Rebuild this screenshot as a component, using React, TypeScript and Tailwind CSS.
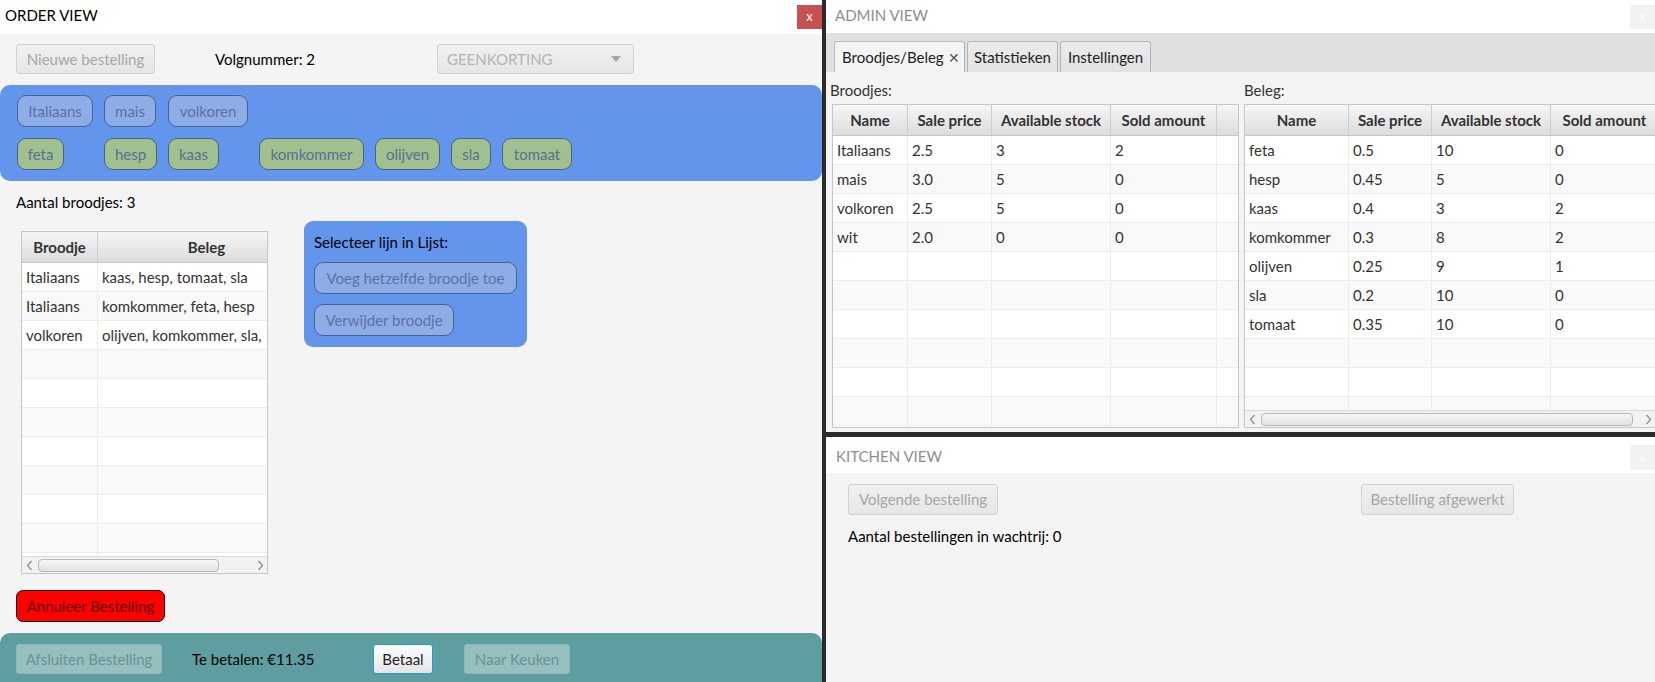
import React from 'react';

type Col = { label: string; w: string };

const ChevL = () => (
  <svg width="7" height="11" viewBox="0 0 7 11" className="shrink-0">
    <path d="M5.5 1 L1.5 5.5 L5.5 10" fill="none" stroke="#8c8c8c" strokeWidth="1.2" />
  </svg>
);
const ChevR = () => (
  <svg width="7" height="11" viewBox="0 0 7 11" className="shrink-0">
    <path d="M1.5 1 L5.5 5.5 L1.5 10" fill="none" stroke="#8c8c8c" strokeWidth="1.2" />
  </svg>
);

function HScroll({ thumb }: { thumb: string }) {
  return (
    <div className="h-[17px] shrink-0 bg-[#f2f2f2] border-t border-[#d9d9d9] flex items-center pl-[4px] pr-[3px]">
      <ChevL />
      <div className={`h-[13px] ml-[5px] rounded-[4px] border border-[#b9b9b9] bg-[linear-gradient(#f7f7f7,#e2e2e2)] ${thumb}`} />
      <div className="flex-1" />
      <ChevR />
    </div>
  );
}

function DataTable({
  cols,
  rows,
  nRows,
  className,
  filler,
  thumb,
}: {
  cols: Col[];
  rows: string[][];
  nRows: number;
  className: string;
  filler?: boolean;
  thumb?: string;
}) {
  const list = Array.from({ length: nRows }, (_, i) => rows[i] || null);
  return (
    <div className={`bg-white border border-[#c6c6c6] flex flex-col overflow-hidden text-[#333] ${className}`}>
      <div className="h-[31px] shrink-0 flex bg-[linear-gradient(#f6f6f6,#dcdcdc)] border-b border-[#c6c6c6]">
        {cols.map((c, i) => (
          <div
            key={i}
            className={`${c.w} shrink-0 flex items-center justify-center font-bold border-r border-[#cdcdcd] whitespace-nowrap overflow-hidden`}
          >
            {c.label}
          </div>
        ))}
        {filler && <div className="flex-1" />}
      </div>
      <div className="flex-1 overflow-hidden flex flex-col">
        {list.map((r, i) => (
          <div
            key={i}
            className={`h-[29px] shrink-0 flex border-b border-[#ececec] ${i % 2 ? 'bg-[#f9f9f9]' : 'bg-white'}`}
          >
            {cols.map((c, j) => (
              <div
                key={j}
                className={`${c.w} shrink-0 flex items-center px-[4px] border-r border-[#ececec] whitespace-nowrap overflow-hidden`}
              >
                {r ? r[j] : ''}
              </div>
            ))}
            {filler && <div className="flex-1" />}
          </div>
        ))}
      </div>
      {thumb && <HScroll thumb={thumb} />}
    </div>
  );
}

function GrayBtn({ label, w, h = 'h-[30px]' }: { label: string; w: string; h?: string }) {
  return (
    <div
      className={`${h} ${w} shrink-0 flex items-center justify-center rounded-[3px] border border-[#d2d2d2] bg-[linear-gradient(#f0f0f0,#e6e6e6)] text-[#a6a6a6] whitespace-nowrap`}
    >
      {label}
    </div>
  );
}

function BlueBtn({ label, w }: { label: string; w: string }) {
  return (
    <div
      className={`h-[32px] ${w} flex items-center justify-center rounded-[9px] border border-[#4a6192] bg-[#8eade6] text-[#5c72a3] whitespace-nowrap`}
    >
      {label}
    </div>
  );
}

function GreenBtn({ label, w }: { label: string; w: string }) {
  return (
    <div
      className={`h-[32px] ${w} flex items-center justify-center rounded-[9px] border border-[#4b6383] bg-[#a0c08f] text-[#5a6f93] whitespace-nowrap`}
    >
      {label}
    </div>
  );
}

export default function App() {
  const orderCols: Col[] = [
    { label: 'Broodje', w: 'w-[76px]' },
    { label: 'Beleg', w: 'w-[218px]' },
  ];
  const orderRows = [
    ['Italiaans', 'kaas, hesp, tomaat, sla'],
    ['Italiaans', 'komkommer, feta, hesp'],
    ['volkoren', 'olijven, komkommer, sla,'],
  ];

  const broodCols: Col[] = [
    { label: 'Name', w: 'w-[75px]' },
    { label: 'Sale price', w: 'w-[84px]' },
    { label: 'Available stock', w: 'w-[119px]' },
    { label: 'Sold amount', w: 'w-[106px]' },
  ];
  const broodRows = [
    ['Italiaans', '2.5', '3', '2'],
    ['mais', '3.0', '5', '0'],
    ['volkoren', '2.5', '5', '0'],
    ['wit', '2.0', '0', '0'],
  ];
  const belegCols: Col[] = [
    { label: 'Name', w: 'w-[104px]' },
    { label: 'Sale price', w: 'w-[83px]' },
    { label: 'Available stock', w: 'w-[119px]' },
    { label: 'Sold amount', w: 'w-[108px]' },
  ];
  const belegRows = [
    ['feta', '0.5', '10', '0'],
    ['hesp', '0.45', '5', '0'],
    ['kaas', '0.4', '3', '2'],
    ['komkommer', '0.3', '8', '2'],
    ['olijven', '0.25', '9', '1'],
    ['sla', '0.2', '10', '0'],
    ['tomaat', '0.35', '10', '0'],
  ];

  return (
    <div className="flex w-[1655px] h-[682px] bg-[#2b2b2b] overflow-hidden font-['Lato',sans-serif] text-[15px] text-[#1a1a1a]">
      {/* ORDER VIEW */}
      <div className="w-[822px] h-full shrink-0 flex flex-col bg-[#f4f4f4]">
        <div className="h-[34px] shrink-0 bg-white flex justify-between">
          <div className="pl-[5px] pt-[5px] leading-[20px] text-black">ORDER VIEW</div>
          <div className="mt-[5px] w-[25px] h-[24px] bg-[#c75050] text-white text-[13px] flex items-center justify-center">
            x
          </div>
        </div>

        <div className="mt-[10px] h-[30px] flex items-center">
          <div className="ml-[16px]">
            <GrayBtn label="Nieuwe bestelling" w="w-[139px]" />
          </div>
          <div className="ml-[60px] w-[222px] text-black">Volgnummer: 2</div>
          <div className="w-[197px] h-[30px] rounded-[3px] border border-[#d2d2d2] bg-[linear-gradient(#f0f0f0,#e6e6e6)] flex items-center pl-[9px] pr-[12px] text-[#b4b4b4]">
            <span className="flex-1">GEENKORTING</span>
            <svg width="10" height="6" viewBox="0 0 10 6">
              <path d="M0 0 L10 0 L5 6 Z" fill="#a8a8a8" />
            </svg>
          </div>
        </div>

        <div className="mt-[11px] h-[96px] shrink-0 rounded-[10px] bg-[#6495ed] pl-[17px] pt-[10px]">
          <div className="grid grid-cols-[76px_53px_80px_105px_65px_40px_70px] gap-x-[11px] gap-y-[11px] justify-items-start">
            <BlueBtn label="Italiaans" w="w-[76px]" />
            <BlueBtn label="mais" w="w-[52px]" />
            <BlueBtn label="volkoren" w="w-[80px]" />
            <div />
            <div />
            <div />
            <div />
            <GreenBtn label="feta" w="w-[47px]" />
            <GreenBtn label="hesp" w="w-[53px]" />
            <GreenBtn label="kaas" w="w-[51px]" />
            <GreenBtn label="komkommer" w="w-[105px]" />
            <GreenBtn label="olijven" w="w-[65px]" />
            <GreenBtn label="sla" w="w-[40px]" />
            <GreenBtn label="tomaat" w="w-[70px]" />
          </div>
        </div>

        <div className="mt-[11px] pl-[16px] leading-[20px] text-black">Aantal broodjes: 3</div>

        <div className="mt-[9px] flex items-start">
          <DataTable
            cols={orderCols}
            rows={orderRows}
            nRows={11}
            className="ml-[21px] mt-[10px] w-[247px] h-[343px]"
            thumb="w-[181px]"
          />
          <div className="ml-[36px] w-[223px] h-[126px] rounded-[9px] bg-[#6495ed] px-[10px] pt-[11px]">
            <div className="leading-[20px] text-black">Selecteer lijn in Lijst:</div>
            <div className="mt-[10px]">
              <BlueBtn label="Voeg hetzelfde broodje toe" w="w-[203px]" />
            </div>
            <div className="mt-[10px]">
              <BlueBtn label="Verwijder broodje" w="w-[140px]" />
            </div>
          </div>
        </div>

        <div className="mt-[16px] ml-[16px] w-[149px] h-[32px] rounded-[7px] border border-[#2a0000] bg-[#ff0000] text-[#5c0000] flex items-center justify-center">
          Annuleer Bestelling
        </div>

        <div className="flex-1" />

        <div className="h-[49px] shrink-0 rounded-t-[10px] bg-[#5f9ea0] flex items-start pt-[11px]">
          <div className="ml-[16px] w-[146px] h-[30px] rounded-[3px] border border-[#8cb8b9] bg-[#96bfc0] text-[#6c9193] flex items-center justify-center whitespace-nowrap">
            Afsluiten Bestelling
          </div>
          <div className="ml-[30px] w-[181px] h-[30px] flex items-center text-black">Te betalen: €11.35</div>
          <div className="w-[60px] h-[30px] rounded-[3px] border-[1.5px] border-[#1f9fd6] bg-[linear-gradient(#fdfdfd,#e4e4e4)] text-[#222] flex items-center justify-center">
            Betaal
          </div>
          <div className="ml-[31px] w-[106px] h-[30px] rounded-[3px] border border-[#8cb8b9] bg-[#96bfc0] text-[#6c9193] flex items-center justify-center whitespace-nowrap">
            Naar Keuken
          </div>
        </div>
      </div>

      {/* RIGHT COLUMN */}
      <div className="ml-[4px] w-[829px] h-full shrink-0 flex flex-col">
        {/* ADMIN VIEW */}
        <div className="h-[432px] shrink-0 bg-[#f4f4f4] flex flex-col overflow-hidden">
          <div className="h-[33px] shrink-0 bg-white flex justify-between">
            <div className="pl-[9px] pt-[5px] leading-[20px] text-[#8e8e8e]">ADMIN VIEW</div>
            <div className="mt-[5px] w-[25px] h-[24px] bg-[#f2f2f2] text-white text-[13px] flex items-center justify-center">
              x
            </div>
          </div>
          <div className="h-[39px] shrink-0 bg-[#e0e0e0] flex items-end pl-[8px] gap-[2px]">
            <div className="w-[131px] h-[31px] rounded-t-[3px] border border-b-0 border-[#b5b5b5] bg-[#f4f4f4] flex items-center pl-[7px] text-[#222]">
              Broodjes/Beleg
              <span className="ml-[4px] text-[14px] text-[#555]">✕</span>
            </div>
            <div className="w-[91px] h-[31px] rounded-t-[3px] border border-b-0 border-[#b5b5b5] bg-[linear-gradient(#ececec,#e2e2e2)] flex items-center justify-center text-[#222]">
              Statistieken
            </div>
            <div className="w-[91px] h-[31px] rounded-t-[3px] border border-b-0 border-[#b5b5b5] bg-[linear-gradient(#ececec,#e2e2e2)] flex items-center justify-center text-[#222]">
              Instellingen
            </div>
          </div>
          <div className="flex-1 flex">
            <div className="ml-[6px] w-[407px] shrink-0 flex flex-col">
              <div className="-ml-[2px] mt-[8px] leading-[20px] text-[#333]">Broodjes:</div>
              <DataTable
                cols={broodCols}
                rows={broodRows}
                nRows={11}
                className="mt-[4px] w-[407px] h-[324px]"
                filler
              />
            </div>
            <div className="ml-[5px] w-[420px] shrink-0 flex flex-col">
              <div className="mt-[8px] leading-[20px] text-[#333]">Beleg:</div>
              <DataTable
                cols={belegCols}
                rows={belegRows}
                nRows={11}
                className="mt-[4px] w-[412px] h-[324px]"
                thumb="w-[372px]"
              />
            </div>
          </div>
        </div>

        <div className="h-[5px] shrink-0" />

        {/* KITCHEN VIEW */}
        <div className="flex-1 bg-[#f4f4f4] flex flex-col">
          <div className="h-[36px] shrink-0 bg-white flex justify-between">
            <div className="pl-[10px] pt-[9px] leading-[20px] text-[#8e8e8e]">KITCHEN VIEW</div>
            <div className="mt-[8px] w-[25px] h-[25px] bg-[#f2f2f2] text-white text-[13px] flex items-center justify-center">
              x
            </div>
          </div>
          <div className="pl-[22px] pt-[11px] flex flex-col">
            <div className="flex">
              <GrayBtn label="Volgende bestelling" w="w-[150px]" h="h-[31px]" />
              <div className="ml-[363px]">
                <GrayBtn label="Bestelling afgewerkt" w="w-[153px]" h="h-[31px]" />
              </div>
            </div>
            <div className="mt-[11px] leading-[20px] text-black">Aantal bestellingen in wachtrij: 0</div>
          </div>
        </div>
      </div>
    </div>
  );
}
